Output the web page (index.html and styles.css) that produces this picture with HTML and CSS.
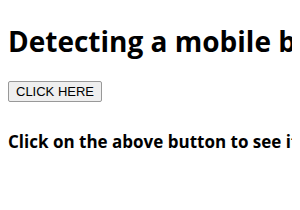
FILE: index.html
```html
<!DOCTYPE html>
<html lang="en">
<head>
    <meta charset="UTF-8">
    <meta name="viewport" content="width=device-width, initial-scale=1.0">
    <title>Detecting a mobile browser</title>
    <link rel="stylesheet" href="styles.css">
</head>
<body>
    <h1>Detecting a mobile browser</h1>
    <button class="check-btn">CLICK HERE</button>
    <h3 class="result">Click on the above button to see if you are using a mobile browser</h3>
</body>
</html>
```

FILE: styles.css
```css
html, body {
    overflow: hidden;
}

body {
    margin: 8px;
    font-family: "Open Sans", sans-serif;
    color: #000;
    background: #fff;
    white-space: nowrap;
}

h1 {
    font-size: 28px;
    font-weight: bold;
    margin: 14px 0 19px;
}

.check-btn {
    font-family: "Liberation Sans", Arial, sans-serif;
    font-size: 13px;
    padding: 2px 7px;
    background: #efefef;
    border: 1px solid #999;
    border-radius: 2px;
    color: #000;
}

.result {
    font-size: 17px;
    font-weight: bold;
    margin: 28px 0;
}
```
